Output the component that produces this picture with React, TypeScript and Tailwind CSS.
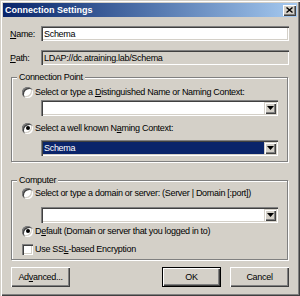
import React from "react";

const font = { fontFamily: '"Liberation Sans", Arial, sans-serif' };

function Radio({ checked }: { checked?: boolean }) {
  return (
    <span className="relative flex h-[11px] w-[11px] shrink-0 items-center justify-center rounded-full bg-white shadow-[inset_1px_1px_0_#808080,inset_2px_2px_0_#404040,inset_-1px_-1px_0_#ffffff,inset_-2px_-2px_0_#d4d0c8]">
      {checked && <span className="h-[4px] w-[4px] rounded-full bg-black" />}
    </span>
  );
}

function Checkbox() {
  return (
    <span className="h-[11px] w-[11px] shrink-0 bg-white shadow-[inset_1px_1px_0_#808080,inset_2px_2px_0_#404040,inset_-1px_-1px_0_#ffffff,inset_-2px_-2px_0_#d4d0c8]" />
  );
}

function Arrow() {
  return (
    <svg width="7" height="4" viewBox="0 0 7 4">
      <path d="M0 0h7L3.5 4z" fill="#000" />
    </svg>
  );
}

function Combo({ value, selected }: { value?: string; selected?: boolean }) {
  return (
    <div className="flex h-[16px] w-[237px] items-center bg-white p-[2px] shadow-[inset_1px_1px_0_#808080,inset_2px_2px_0_#404040,inset_-1px_-1px_0_#ffffff,inset_-2px_-2px_0_#d4d0c8]">
      <div className="flex h-full flex-1 items-center">
        {selected ? (
          <span className="flex h-full w-full items-center bg-[#0a246a] pl-[1px] text-white">{value}</span>
        ) : null}
      </div>
      <div className="flex h-full w-[12px] items-center justify-center bg-[#d4d0c8] shadow-[inset_1px_1px_0_#d4d0c8,inset_2px_2px_0_#ffffff,inset_-1px_-1px_0_#404040,inset_-2px_-2px_0_#808080]">
        <Arrow />
      </div>
    </div>
  );
}

function Group({ title, children, className }: { title: string; children: React.ReactNode; className?: string }) {
  return (
    <div
      className={
        "relative ml-[1px] w-[277px] border border-[#808080] px-[10px] shadow-[1px_1px_0_#ffffff,inset_1px_1px_0_#ffffff] " +
        (className ?? "")
      }
    >
      <span className="absolute -top-[7px] left-[5px] bg-[#d4d0c8] px-[2px] leading-[12px]">{title}</span>
      {children}
    </div>
  );
}

function Button({ children, isDefault }: { children: React.ReactNode; isDefault?: boolean }) {
  return (
    <div
      className={
        "flex h-[20px] w-[59px] items-center justify-center bg-[#d4d0c8] " +
        (isDefault
          ? "border border-black shadow-[inset_1px_1px_0_#ffffff,inset_-1px_-1px_0_#404040,inset_-2px_-2px_0_#808080]"
          : "shadow-[inset_1px_1px_0_#ffffff,inset_-1px_-1px_0_#404040,inset_-2px_-2px_0_#808080]")
      }
    >
      {children}
    </div>
  );
}

export default function App() {
  return (
    <div
      style={font}
      className="flex h-[296px] w-[300px] flex-col whitespace-nowrap bg-[#d4d0c8] p-[3px] text-[9px] leading-[12px] tracking-[-0.3px] text-black shadow-[inset_1px_1px_0_#d4d0c8,inset_2px_2px_0_#ffffff,inset_-1px_-1px_0_#404040,inset_-2px_-2px_0_#808080]"
    >
      {/* Title bar */}
      <div className="flex h-[14px] items-center justify-between bg-gradient-to-r from-[#0a246a] to-[#a6caf0] pl-[2px] pr-[1px]">
        <span className="text-[9px] font-bold tracking-normal text-white">Connection Settings</span>
        <div className="flex h-[11px] w-[13px] items-center justify-center bg-[#d4d0c8] shadow-[inset_1px_1px_0_#ffffff,inset_-1px_-1px_0_#404040,inset_-2px_-2px_0_#808080]">
          <svg width="7" height="6" viewBox="0 0 7 6">
            <path d="M0.5 0.5l6 5M6.5 0.5l-6 5" stroke="#000" strokeWidth="1.4" />
          </svg>
        </div>
      </div>

      <div className="flex flex-col pl-[7px] pr-[8px]">
        {/* Name */}
        <div className="mt-[9px] flex h-[15px] items-center">
          <span className="w-[31px]">
            <u className="underline-offset-1">N</u>ame:
          </span>
          <div className="flex h-full flex-1 items-center bg-white pl-[3px] shadow-[inset_1px_1px_0_#808080,inset_2px_2px_0_#404040,inset_-1px_-1px_0_#ffffff,inset_-2px_-2px_0_#d4d0c8]">
            Schema
          </div>
        </div>

        {/* Path */}
        <div className="mt-[9px] flex h-[15px] items-center">
          <span className="w-[31px]">
            <u className="underline-offset-1">P</u>ath:
          </span>
          <div className="flex h-full flex-1 items-center bg-[#d4d0c8] pl-[3px] shadow-[inset_1px_1px_0_#808080,inset_2px_2px_0_#404040,inset_-1px_-1px_0_#ffffff,inset_-2px_-2px_0_#d4d0c8]">
            LDAP://dc.atraining.lab/Schema
          </div>
        </div>

        {/* Connection Point */}
        <Group title="Connection Point" className="mt-[12px] pb-[5px] pt-[8px]">
          <div className="flex h-[12px] items-center gap-[2px]">
            <Radio />
            <span>
              Select or type a <u className="underline-offset-1">D</u>istinguished Name or Naming Context:
            </span>
          </div>
          <div className="mt-[2px] pl-[19px]">
            <Combo />
          </div>
          <div className="mt-[6px] flex h-[12px] items-center gap-[2px]">
            <Radio checked />
            <span>
              Select a well known N<u className="underline-offset-1">a</u>ming Context:
            </span>
          </div>
          <div className="mt-[6px] pl-[19px]">
            <Combo value="Schema" selected />
          </div>
        </Group>

        {/* Computer */}
        <Group title="Computer" className="mt-[18px] pb-[4px] pt-[6px]">
          <div className="flex h-[12px] items-center gap-[2px]">
            <Radio />
            <span>Select or type a domain or server: (Server | Domain [:port])</span>
          </div>
          <div className="mt-[8px] pl-[19px]">
            <Combo />
          </div>
          <div className="mt-[2px] flex h-[12px] items-center gap-[2px]">
            <Radio checked />
            <span>
              D<u className="underline-offset-1">e</u>fault (Domain or server that you logged in to)
            </span>
          </div>
          <div className="mt-[6px] flex h-[12px] items-center gap-[2px]">
            <Checkbox />
            <span>
              Use SS<u className="underline-offset-1">L</u>-based Encryption
            </span>
          </div>
        </Group>

        {/* Buttons */}
        <div className="mt-[7px] flex items-center pl-[1px]">
          <Button>
            <span>
              Ad<u className="underline-offset-1">v</u>anced...
            </span>
          </Button>
          <div className="flex-1" />
          <Button isDefault>OK</Button>
          <div className="w-[9px]" />
          <Button>Cancel</Button>
        </div>
      </div>
    </div>
  );
}
